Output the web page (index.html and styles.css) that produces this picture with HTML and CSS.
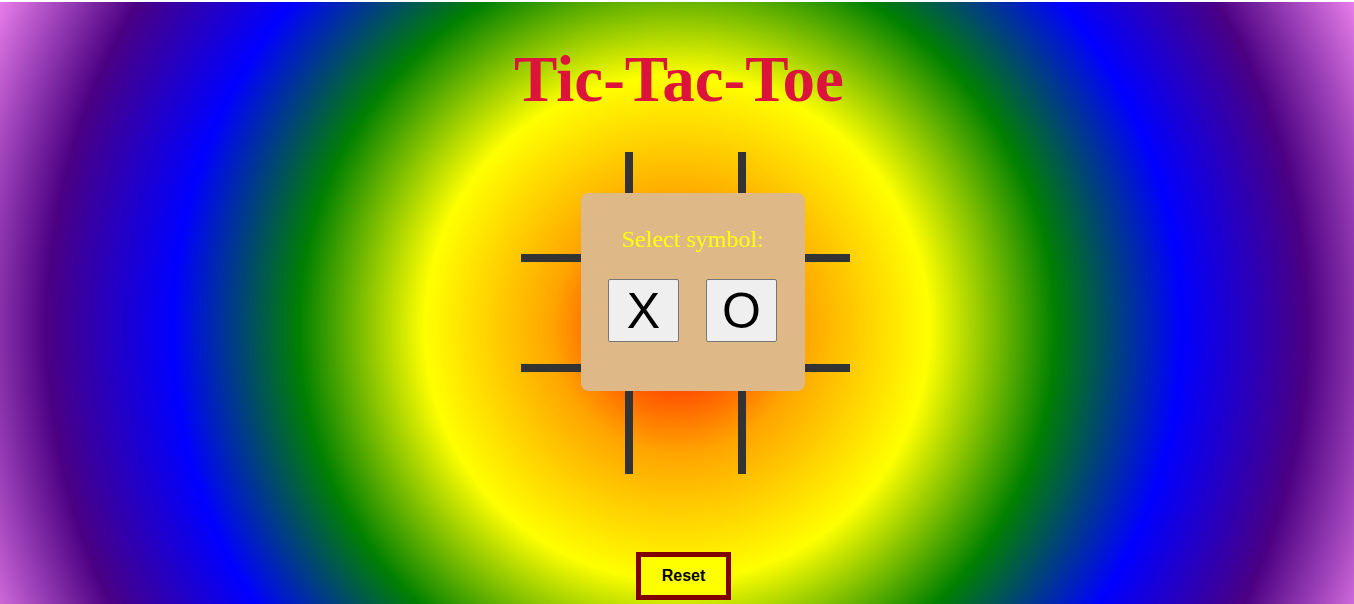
FILE: index.html
```html
<!DOCTYPE html>
<html lang="en">
<head>
<meta charset="utf-8">
<title>Tic-Tac-Toe</title>
<link rel="stylesheet" href="styles.css">
</head>
<body>
<div class="page">
  <h1 class="title">Tic-Tac-Toe</h1>
  <div class="board">
    <div class="cell"></div>
    <div class="cell"></div>
    <div class="cell"></div>
    <div class="cell"></div>
    <div class="cell"></div>
    <div class="cell"></div>
    <div class="cell"></div>
    <div class="cell"></div>
    <div class="cell"></div>
    <div class="picker">
      <p class="picker-label">Select symbol:</p>
      <div class="picker-buttons">
        <button class="symbol">X</button>
        <button class="symbol">O</button>
      </div>
    </div>
  </div>
  <button class="reset">Reset</button>
</div>
</body>
</html>
```

FILE: styles.css
```css
html, body {
  margin: 0;
  padding: 0;
  background: #ffffff;
  overflow: hidden;
}

.page {
  margin-top: 2px;
  height: 602px;
  display: flex;
  flex-direction: column;
  align-items: center;
  background: radial-gradient(circle 756px at 50% 326px, red, orange, yellow, green, blue, indigo, violet);
}

.title {
  margin: 41px 0 0 4px;
  font-family: "Liberation Serif", "Times New Roman", serif;
  font-weight: bold;
  font-size: 65px;
  line-height: 72px;
  color: #dc143c;
}

.board {
  position: relative;
  margin: 37px 0 0 16px;
  display: grid;
  grid-template-columns: 108px 113px 108px;
}

.cell {
  height: 102px;
  border: 0 solid #333333;
}

.cell:nth-child(3n+1),
.cell:nth-child(3n+2) {
  border-right-width: 4px;
}

.cell:nth-child(3n+2),
.cell:nth-child(3n+3) {
  border-left-width: 4px;
}

.cell:nth-child(-n+6) {
  border-bottom-width: 4px;
}

.cell:nth-child(n+4):nth-child(-n+9) {
  border-top-width: 4px;
}

.picker {
  position: absolute;
  left: 60px;
  top: 41px;
  width: 224px;
  height: 198px;
  box-sizing: border-box;
  padding-top: 32px;
  background: #deb887;
  border-radius: 8px;
  display: flex;
  flex-direction: column;
  align-items: center;
}

.picker-label {
  margin: 0;
  font-family: "Liberation Serif", "Times New Roman", serif;
  font-size: 24px;
  line-height: 28px;
  color: #ffff00;
}

.picker-buttons {
  margin-top: 26px;
  display: flex;
  gap: 27px;
}

.symbol {
  width: 71px;
  height: 63px;
  padding: 0;
  font-family: "Liberation Sans", Arial, sans-serif;
  font-size: 50px;
  line-height: 1;
  color: #000000;
  background: #efefef;
  border: 1px solid #767676;
  border-radius: 2px;
}

.reset {
  margin: 78px 0 0 13px;
  width: 95px;
  height: 48px;
  padding: 0;
  font-family: "Liberation Sans", Arial, sans-serif;
  font-weight: bold;
  font-size: 16px;
  color: #000000;
  background: #ffff00;
  border: 5px solid #800000;
  border-radius: 0;
}
```
